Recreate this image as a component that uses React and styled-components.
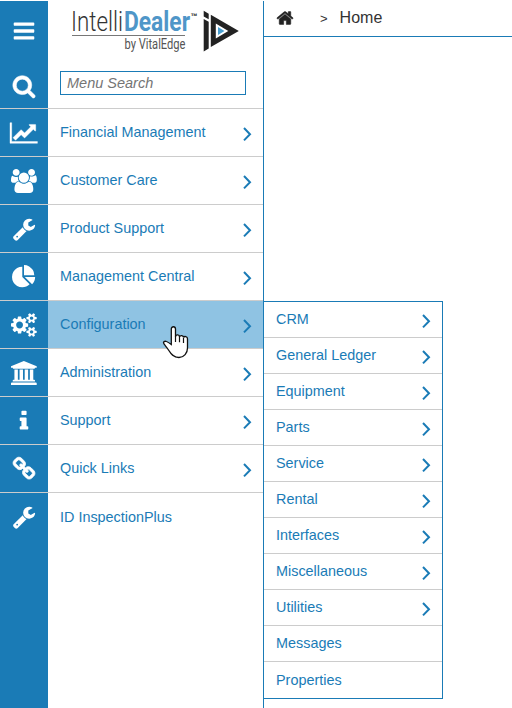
import styled, { createGlobalStyle } from "styled-components"

const blue = "#1a7bb6"

const GlobalStyle = createGlobalStyle`
    * {
        box-sizing: border-box;
    }
    body {
        margin: 0;
        background: #fff;
        font-family: "Liberation Sans", Arial, sans-serif;
    }
`

const Page = styled.div`
    width: 512px;
    height: 708px;
    padding-top: 1px;
    display: flex;
    overflow: hidden;
`

const Sidebar = styled.aside`
    width: 264px;
    height: 707px;
    border-right: 1px solid ${blue};
    background: linear-gradient(to right, ${blue} 48px, #fff 48px);
`

const Top = styled.div`
    height: 108px;
    display: grid;
    grid-template-columns: 48px 1fr;
    border-bottom: 1px solid #ccc;
`

const RailTop = styled.div`
    display: flex;
    flex-direction: column;
    align-items: center;
    padding-top: 18px;
    gap: 31px;
`

const Brand = styled.div`
    padding: 4px 0 0 12px;
    display: flex;
    flex-direction: column;
    gap: 12px;
`

const Search = styled.input`
    width: 186px;
    height: 24px;
    padding: 0 6px;
    border: 1px solid ${blue};
    border-radius: 0;
    outline: none;
    font: italic 14.5px "Liberation Sans", Arial, sans-serif;

    &::placeholder {
        color: #757575;
        opacity: 1;
    }
`

const Menu = styled.ul`
    list-style: none;
    margin: 0;
    padding: 0;
`

const MenuItem = styled.li`
    position: relative;
    height: 48px;
    display: grid;
    grid-template-columns: 48px 1fr;
    border-bottom: 1px solid ${(props) => (props.$last ? "transparent" : "#ccc")};
`

const RailCell = styled.div`
    display: flex;
    align-items: center;
    justify-content: center;
    padding-top: 1px;
`

const Link = styled.a`
    display: flex;
    align-items: center;
    justify-content: space-between;
    padding: ${(props) => (props.$last ? "2px" : "0")} 11px 1px 12px;
    color: ${blue};
    background: ${(props) => (props.$active ? "#8fc3e3" : "transparent")};
    font-size: 14.4px;
    white-space: nowrap;
`

const SubMenu = styled(Menu)`
    position: absolute;
    left: 263px;
    top: 0;
    width: 180px;
    border: 1px solid ${blue};
    background: #fff;
`

const SubItem = styled.li`
    height: 36px;
    display: flex;
    align-items: center;
    justify-content: space-between;
    padding: 0 11.5px 2px 12px;
    border-bottom: 1px solid #ccc;
    color: ${blue};
    font-size: 14.4px;

    &:last-child {
        padding-bottom: 0;
        border-bottom: none;
    }
`

const Arrow = styled.svg`
    width: 10px;
    height: 16px;
    margin-top: 4px;
    fill: none;
    stroke: ${blue};
    stroke-width: 2;
`

const Glyph = styled.svg`
    display: block;
    height: ${(props) => props.$size}px;
    overflow: visible;
    fill: ${(props) => props.$color};
    stroke: ${(props) => props.$color};
    stroke-width: ${(props) => props.$weight};
`

const Pointer = styled.svg`
    position: absolute;
    left: 162px;
    top: 24px;
    width: 28px;
    height: 34px;
    z-index: 1;
`

const Main = styled.main`
    flex: 1;
`

const Breadcrumb = styled.nav`
    height: 36px;
    border-bottom: 1px solid ${blue};
    display: flex;
    align-items: center;
    padding: 0 0 2px 12px;
    color: #333;
    font-size: 16px;
`

const Separator = styled.span`
    margin: 2px 12px 0 26px;
    font-size: 13px;
`

const wheel =
    "v140q0 16-149 31-12 27-30 52 51 113 51 138 0 4-4 7-122 71-124 71-8 0-46-47t-52-68q-20 2-30 2t-30-2q-14 21-52 68t-46 47q-2 0-124-71-4-3-4-7 0-25 51-138-18-25-30-52-149-15-149-31v-140q0-16 149-31 13-29 30-52-51-113-51-138 0-4 4-7 4-2 35-20t59-34 30-16q8 0 46 46.5t52 67.5q20-2 30-2t30 2q51-71 92-112l6-2q4 0 124 70 4 3 4 7 0 25-51 138 17 23 30 52 149 15 149 31z"

const icons = {
    bars: [1792, "M1664 1344v128q0 26-19 45t-45 19h-1408q-26 0-45-19t-19-45v-128q0-26 19-45t45-19h1408q26 0 45 19t19 45zm0-512v128q0 26-19 45t-45 19h-1408q-26 0-45-19t-19-45v-128q0-26 19-45t45-19h1408q26 0 45 19t19 45zm0-512v128q0 26-19 45t-45 19h-1408q-26 0-45-19t-19-45v-128q0-26 19-45t45-19h1408q26 0 45 19t19 45z"],
    search: [1792, "M1216 832q0-185-131.5-316.5t-316.5-131.5-316.5 131.5-131.5 316.5 131.5 316.5 316.5 131.5 316.5-131.5 131.5-316.5zm512 832q0 52-38 90t-90 38q-54 0-90-38l-343-342q-179 124-399 124-143 0-273.5-55.5t-225-150-150-225-55.5-273.5 55.5-273.5 150-225 225-150 273.5-55.5 273.5 55.5 225 150 150 225 55.5 273.5q0 220-124 399l343 343q37 37 37 90z"],
    chart: [2048, "M2048 1536v128h-2048v-1536h128v1408h1920zm-128-1248v435q0 21-19.5 29.5t-35.5-7.5l-121-121-633 633q-10 10-23 10t-23-10l-233-233-416 416-192-192 585-585q10-10 23-10t23 10l233 233 464-464-121-121q-16-16-7.5-35.5t29.5-19.5h435q14 0 23 9t9 23z"],
    users: [1920, "M593 896q-162 5-265 128h-134q-82 0-138-40.5t-56-118.5q0-353 124-353 6 0 43.5 21t97.5 42.5 119 21.5q67 0 133-23-5 37-5 66 0 159 92 293zm1071 637q0 120-73 189.5t-194 69.5h-874q-121 0-194-69.5t-73-189.5q0-53 3.5-103.5t14-109 26.5-108.5 43-97.5 62-81 85.5-53.5 111.5-20q10 0 43 21.5t73 48 107 48 135 21.5 135-21.5 107-48 73-48 43-21.5q61 0 111.5 20t85.5 53.5 62 81 43 97.5 26.5 108.5 14 109 3.5 103.5zm-1024-1277q0 106-75 181t-181 75-181-75-75-181 75-181 181-75 181 75 75 181zm704 384q0 159-112.5 271.5t-271.5 112.5-271.5-112.5-112.5-271.5 112.5-271.5 271.5-112.5 271.5 112.5 112.5 271.5zm576 225q0 78-56 118.5t-138 40.5h-134q-103-123-265-128 92-134 92-293 0-29-5-66 66 23 133 23 59 0 119-21.5t97.5-42.5 43.5-21q124 0 124 353zm-128-609q0 106-75 181t-181 75-181-75-75-181 75-181 181-75 181 75 75 181z"],
    wrench: [1792, "M448 1472q0-26-19-45t-45-19-45 19-19 45 19 45 45 19 45-19 19-45zm644-420l-682 682q-37 37-90 37-52 0-91-37l-106-108q-38-36-38-90 0-53 38-91l681-681q39 98 114.5 173.5t173.5 114.5zm634-435q0 39-23 106-47 134-164.5 217.5t-258.5 83.5q-185 0-316.5-131.5t-131.5-316.5 131.5-316.5 316.5-131.5q58 0 121.5 16.5t107.5 46.5q16 11 16 28t-16 28l-293 169v224l193 107q5-3 79-48.5t135.5-81 70.5-35.5q15 0 23.5 10t8.5 25z"],
    pie: [1792, "M768 890l546 546q-106 108-247.5 168t-298.5 60q-209 0-385.5-103t-279.5-279.5-103-385.5 103-385.5 279.5-279.5 385.5-103v762zm187 6h773q0 157-60 298.5t-168 247.5zm709-128h-768v-768q209 0 385.5 103t279.5 279.5 103 385.5z"],
    cogs: [1920, "M896 896q0-106-75-181t-181-75-181 75-75 181 75 181 181 75 181-75 75-181zm768 512q0-52-38-90t-90-38-90 38-38 90q0 53 37.5 90.5t90.5 37.5 90.5-37.5 37.5-90.5zm0-1024q0-52-38-90t-90-38-90 38-38 90q0 53 37.5 90.5t90.5 37.5 90.5-37.5 37.5-90.5zm-384 421v185q0 10-7 19.5t-16 10.5l-155 24q-11 35-32 76 34 48 90 115 7 11 7 20 0 12-7 19-23 30-82.5 89.5t-78.5 59.5q-11 0-21-7l-115-90q-37 19-77 31-11 108-23 155-7 24-30 24h-186q-11 0-20-7.5t-10-17.5l-23-153q-34-10-75-31l-118 89q-7 7-20 7-11 0-21-8-144-133-144-160 0-9 7-19 10-14 41-53t47-61q-23-44-35-82l-152-24q-10-1-17-9.5t-7-19.5v-185q0-10 7-19.5t16-10.5l155-24q11-35 32-76-34-48-90-115-7-11-7-20 0-12 7-20 22-30 82-89t79-59q11 0 21 7l115 90q34-18 77-32 11-108 23-154 7-24 30-24h186q11 0 20 7.5t10 17.5l23 153q34 10 75 31l118-89q8-7 20-7 11 0 21 8 144 133 144 160 0 8-7 19-12 16-42 54t-45 60q23 48 34 82l152 23q10 2 17 10.5t7 19.5zM1920 1338" + wheel + "M1920 314" + wheel],
    bank: [1920, "M960 0l960 384v128h-128q0 26-20.5 45t-48.5 19h-1526q-28 0-48.5-19t-20.5-45h-128v-128zm-704 640h256v768h128v-768h256v768h128v-768h256v768h128v-768h256v768h59q28 0 48.5 19t20.5 45v64h-1664v-64q0-26 20.5-45t48.5-19h59v-768zm1595 960q28 0 48.5 19t20.5 45v128h-1920v-128q0-26 20.5-45t48.5-19h1782z"],
    info: [1792, "M1216 1344v128q0 26-19 45t-45 19h-512q-26 0-45-19t-19-45v-128q0-26 19-45t45-19h64v-384h-64q-26 0-45-19t-19-45v-128q0-26 19-45t45-19h384q26 0 45 19t19 45v576h64q26 0 45 19t19 45zm-128-1152v192q0 26-19 45t-45 19h-256q-26 0-45-19t-19-45v-192q0-26 19-45t45-19h256q26 0 45 19t19 45z"],
    link: [1792, "M1520 1216q0-40-28-68l-208-208q-28-28-68-28-42 0-72 32 3 3 19 18.5t21.5 21.5 15 19 13 25.5 3.5 27.5q0 40-28 68t-68 28q-15 0-27.5-3.5t-25.5-13-19-15-21.5-21.5-18.5-19q-33 31-33 73 0 40 28 68l206 207q27 27 68 27 40 0 68-26l147-146q28-28 28-67zm-703-705q0-40-28-68l-206-207q-28-28-68-28-39 0-68 27l-147 146q-28 28-28 67 0 40 28 68l208 208q27 27 68 27 42 0 72-31-3-3-19-18.5t-21.5-21.5-15-19-13-25.5-3.5-27.5q0-40 28-68t68-28q15 0 27.5 3.5t25.5 13 19 15 21.5 21.5 18.5 19q33-31 33-73zm895 705q0 120-85 203l-147 146q-83 83-203 83-121 0-204-85l-206-207q-83-83-83-203 0-123 88-209l-88-88q-86 88-208 88-120 0-204-84l-208-208q-84-84-84-204t85-203l147-146q83-83 203-83 121 0 204 85l206 207q83 83 83 203 0 123-88 209l88 88q86-88 208-88 120 0 204 84l208 208q84 84 84 204z"],
    home: [1792, "M1472 992v480q0 26-19 45t-45 19h-384v-384h-256v384h-384q-26 0-45-19t-19-45v-480q0-1 .5-3t.5-3l575-474 575 474q1 2 1 6zm223-69l-62 74q-8 9-21 11h-3q-13 0-21-7l-692-577-692 577q-12 8-24 7-13-2-21-11l-62-74q-8-10-7-23.5t11-21.5l719-599q32-26 76-26t76 26l244 204v-195q0-14 9-23t23-9h192q14 0 23 9t9 23v408l219 182q10 8 11 21.5t-7 23.5z"],
}

// the thin glyphs get an outline so they stay readable on the rail
const weights = { link: 60, search: 40, chart: 30, home: 50 }

const Icon = ({ name, size = 24, color = "#fff" }) => (
    <Glyph viewBox={`0 0 ${icons[name][0]} 1792`} $size={size} $color={color} $weight={weights[name] || 0}>
        <path d={icons[name][1]} />
    </Glyph>
)

const Chevron = () => (
    <Arrow viewBox="0 0 10 16">
        <path d="M2 2l6 6.200-6 6.200" />
    </Arrow>
)

const Logo = () => (
    <svg width="186" height="54" viewBox="60 5 186 54" fontFamily="Roboto, sans-serif">
        <text x="71" y="31" fontSize="28.500" fontWeight="300" fill="#333" textLength="52" lengthAdjust="spacingAndGlyphs">Intelli</text>
        <text x="124" y="31" fontSize="28.500" fontWeight="700" fill="#4f96c8" textLength="66" lengthAdjust="spacingAndGlyphs">Dealer</text>
        <text x="190.500" y="20" fontSize="9" fontWeight="700" fill="#333" textLength="7" lengthAdjust="spacingAndGlyphs">™</text>
        <path d="M72 35.500h113" stroke="#777" />
        <text x="124.500" y="49" fontSize="14.500" fill="#555" textLength="61" lengthAdjust="spacingAndGlyphs">by VitalEdge</text>
        <path fill="#222" d="M203.700 10.700l5 3v5.600l-5-2.800zM203.700 19l5 2.800v26.700l-5 3z" />
        <path fill="#222" fillRule="evenodd" d="M210.800 14.800l28 16.300-28 16zM215.800 23.500v15l12.500-7.500z" />
        <path fill="#4a9fd0" d="M218 27l6.500 4-6.500 4z" />
    </svg>
)

const menu = [
    { icon: "chart", label: "Financial Management" },
    { icon: "users", label: "Customer Care" },
    { icon: "wrench", label: "Product Support" },
    { icon: "pie", label: "Management Central" },
    { icon: "cogs", label: "Configuration", active: true },
    { icon: "bank", label: "Administration" },
    { icon: "info", label: "Support" },
    { icon: "link", label: "Quick Links" },
    { icon: "wrench", label: "ID InspectionPlus", last: true },
]

const subMenu = [
    "CRM",
    "General Ledger",
    "Equipment",
    "Parts",
    "Service",
    "Rental",
    "Interfaces",
    "Miscellaneous",
    "Utilities",
    "Messages",
    "Properties",
]

// Messages and Properties open directly, so they have no arrow
const leaves = ["Messages", "Properties"]

const App = () => {
    return (
        <Page>
            <GlobalStyle />
            <Sidebar>
                <Top>
                    <RailTop>
                        <Icon name="bars" />
                        <Icon name="search" />
                    </RailTop>
                    <Brand>
                        <Logo />
                        <Search placeholder="Menu Search" />
                    </Brand>
                </Top>
                <Menu>
                    {menu.map((item) => (
                        <MenuItem key={item.label} $last={item.last}>
                            <RailCell>
                                <Icon name={item.icon} />
                            </RailCell>
                            <Link $active={item.active} $last={item.last}>
                                {item.label}
                                {!item.last && <Chevron />}
                            </Link>
                            {item.active && (
                                <>
                                    <SubMenu>
                                        {subMenu.map((label) => (
                                            <SubItem key={label}>
                                                {label}
                                                {!leaves.includes(label) && <Chevron />}
                                            </SubItem>
                                        ))}
                                    </SubMenu>
                                    <Pointer viewBox="0 0 28 34">
                                        <path
                                            d="M9.300 19.500V4c0-3 4.200-3 4.200 0v7.500c.5-2.200 4-2 4 .4.700-2 4-1.600 4 .7.800-1.800 4-1.300 4 1.200v9.200c0 5-3.500 9.500-8.500 9.500-5.500 0-8-3.500-10.500-7.500-1.200-2-3.500-4.500-4.700-6.300-1-1.800.8-3 2.700-2.200 1.800.7 3.500 2 4.800 3z"
                                            fill="#fff"
                                            stroke="#111"
                                            strokeWidth="1.300"
                                        />
                                        <path d="M13.500 11v6M17.500 12v5.300M21.500 13v5" stroke="#111" strokeWidth="1.200" />
                                    </Pointer>
                                </>
                            )}
                        </MenuItem>
                    ))}
                </Menu>
            </Sidebar>
            <Main>
                <Breadcrumb>
                    <Icon name="home" size={18} color="#222" />
                    <Separator>&gt;</Separator>
                    Home
                </Breadcrumb>
            </Main>
        </Page>
    )
}

export default App
